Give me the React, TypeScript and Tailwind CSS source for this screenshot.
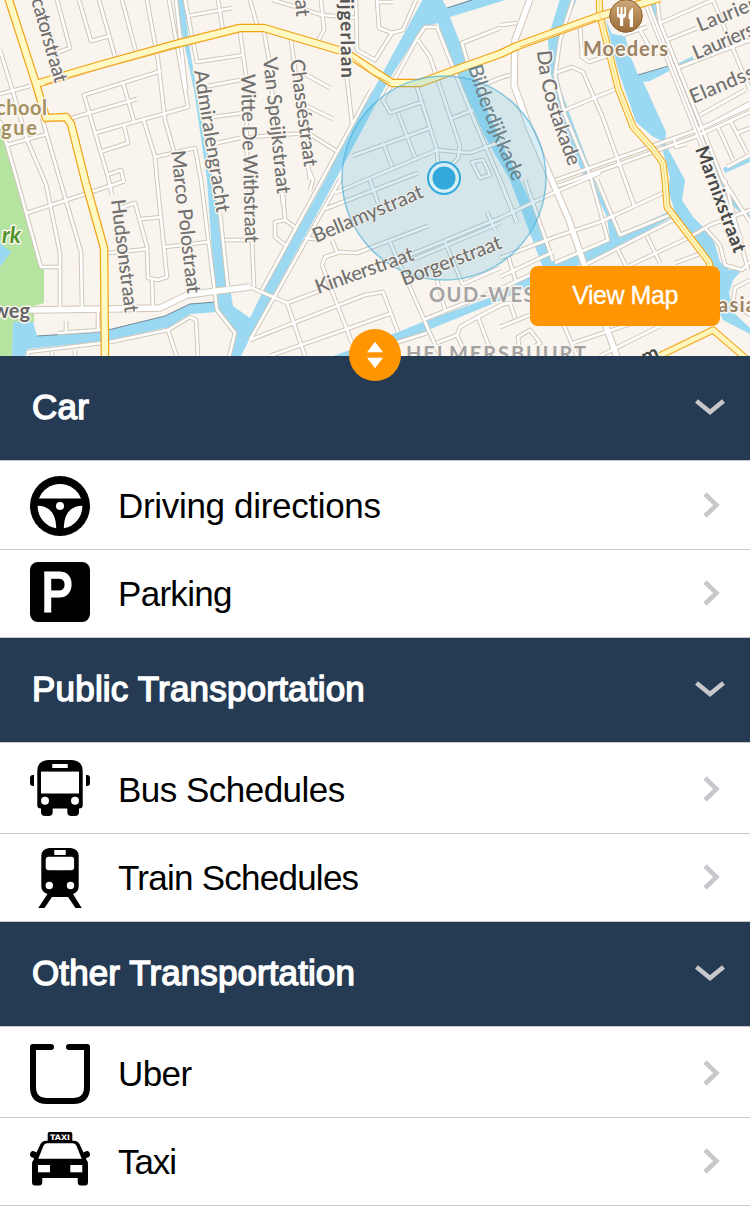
import type { ReactNode } from "react";

const HALO = "#faf5ee";

const water: string[] = [
  "M175 0 H184 L190 50 L200 110 L213 180 L223 240 L230 288 L233 306 L250 318 L262 293 L325 180 L347 133 L375 87 L423 -1 H442 L447 8 L475 -2 H512 L450 17 L468 63 L500 140 L525 190 L555 262 L608 240 L672 210 L675 213 L672 217 L610 252 L548 278 L497 302 L423 332 L355 358 H328 L393 334 L423 322 L497 295 L543 268 L510 180 L485 137 L455 70 L438 23 L422 28 L390 78 L378 100 L337 177 L250 338 L240 358 H227 L236 334 L217 312 L190 314 L170 327 L105 341 L28 349 L24 358 H12 L13 322 H33 L37 336 L100 332 L165 316 L190 304 L215 302 L214 280 L207 180 L194 90 Z",
  "M560 -1 H577 L560 37 L556 67 L561 90 L573 123 L592 173 L598 190 L612 217 L620 237 L610 241 L607 217 L590 182 L582 173 L563 123 L549 67 L548 38 Z",
  "M605 18 L612 34 L625 36 L630 55 L638 75 L675 65 L693 56 V60 L675 68 L650 81 L643 82 L648 92 L650 97 L666 132 L665 143 L673 158 L685 180 L682 200 L693 217 L713 237 L720 262 L730 270 H742 L733 280 L729 293 L734 313 L750 328 V334 L723 320 L713 300 V267 L690 235 L675 212 L668 190 L670 178 L660 140 L652 136 L636 122 L618 70 Z",
  "M647 -1 H655 L657 23 L673 60 L700 122 L723 180 L732 198 L750 215 V222 L729 202 L717 178 L696 124 L671 64 L656 30 Z",
  "M723 168 L750 158 V162 L725 173 Z",
];

const minor: string[] = [
  "M0 50 L13 92 L27 140 L46 184 L60 253 V308", "M0 94 L30 86", "M42 118 L60 180 L81 252 L82 308",
  "M7 145 L47 134", "M0 121 L17 180 L41 267 H60", "M27 213 L125 181", "M57 0 L70 48 L56 53",
  "M79 0 L91 41 L110 36", "M99 0 L116 60", "M122 0 L136 52", "M147 0 L158 60 L165 120 L175 155",
  "M169 0 L188 107 L95 133", "M176 0 L186 90", "M161 71 L84 95 L108 177 L112 195", "M123 83 L134 121", "M72 118 L137 99",
  "M100 152 L128 143 L124 125", "M143 118 L155 157 L157 180 L167 277 L158 280 L148 278 L147 247 L135 203 L120 208",
  "M155 157 L195 148 L201 180 L217 310 L235 333 L229 357", "M107 175 L121 170 L124 182",
  "M185 0 L197 62 L243 55", "M188 16 L232 8", "M218 0 L223 31", "M240 32 L246 75 L247 160 L252 242", "M203 87 L240 80",
  "M213 117 L250 112", "M217 143 L240 138", "M141 219 L162 217", "M165 247 L208 242", "M108 253 L147 249", "M152 280 L153 308",
  "M220 213 L228 288", "M225 240 H250",
  "M58 333 L100 330 M98 311 V330 M66 321 V333",
  "M28 357 V352 L110 342 L168 330 L190 317 L196 320 L198 357", "M168 330 L177 357", "M52 352 V357 M75 350 V357",
  "M250 0 L257 25", "M273 0 L322 15 L357 18", "M321 0 L324 30 L318 41", "M356 0 L357 50 L375 60 L392 33 L403 30 L416 0",
  "M377 0 L379 28 L392 33", "M377 2 H393", "M264 32 L269 60 L283 205", "M291 40 L310 180", "M303 73 L330 88", "M307 106 L333 119",
  "M250 137 L308 133 L338 152", "M347 78 L352 123", "M371 90 L322 180 L262 290", "M437 27 H425 L418 37 L383 100 L390 113 L422 102",
  "M437 27 L470 110 L500 180 L517 223", "M418 40 L430 57 L460 146 L458 158 L450 167", "M417 87 L437 150 L438 164",
  "M398 113 L415 157", "M352 156 L430 128", "M383 143 L392 166", "M450 119 L473 110", "M437 150 L470 153 L500 142",
  "M437 150 L335 193", "M325 209 L418 173", "M370 180 L378 203", "M472 162 L480 178 L490 175 L483 160 Z",
  "M500 28 L462 43 L468 64", "M483 85 L500 78", "M252 242 L254 287", "M283 193 L285 220 L275 222 L275 237 L285 245 M285 220 L295 227",
  "M309 170 L313 180 L310 190", "M250 287 L287 303 L322 290", "M340 180 L250 340", "M305 238 L322 240",
  "M250 340 L365 295 L383 292 L398 332", "M270 356 L392 313", "M287 303 L305 356", "M322 265 L352 343", "M322 265 L325 257 L340 252 L357 253 L428 226",
  "M332 240 L337 252", "M390 242 L440 356", "M445 242 L463 285", "M487 212 L495 230", "M410 255 L500 218 L553 193 L600 173",
  "M412 260 L500 223", "M437 280 L445 310", "M395 343 L427 333", "M423 320 L500 289 L545 268", "M463 284 L500 268",
  "M478 317 L505 303 M478 317 L493 357 M437 343 L457 335 L460 327 L478 317", "M457 335 L466 355", "M500 25 L517 23", "M500 78 L510 75",
  "M573 0 L560 40 L555 75 L565 115 L590 175 L608 240 L555 263", "M555 73 L572 67 L583 72 L603 118 L625 180 L634 205",
  "M580 25 L582 57 L589 62 L607 56", "M558 113 L618 88", "M556 180 L697 130 L750 106", "M558 186 L697 136 L750 112",
  "M623 35 L647 27", "M640 30 L655 57", "M660 23 L713 0", "M667 40 L697 28", "M677 68 L750 40",
  "M713 0 L750 90", "M657 0 L660 23 L723 180 L750 222", "M700 115 L745 90", "M705 127 L750 103", "M718 127 L733 160",
  "M730 120 L747 153", "M737 133 L750 128", "M727 167 L750 155", "M674 138 L676 147 L686 144",
  "M500 258 L555 237 L600 222 L663 193", "M525 180 L553 261", "M597 180 L620 235 L672 214", "M625 180 L634 205",
  "M500 277 L553 252 M508 255 L516 282", "M500 180 L517 222", "M587 264 L677 218", "M617 248 L628 270", "M647 236 L660 263",
  "M620 270 L690 237 L710 225 L750 210", "M675 263 L705 252", "M705 228 L720 245 L725 265 L742 270 L750 262", "M725 180 L736 225 L748 270",
  "M750 280 L735 288 L733 303 L750 315", "M500 305 L510 303 L515 318", "M500 327 L530 315", "M520 356 L518 337 L530 330 L540 343 L535 346",
  "M563 323 L577 356", "M573 343 L633 323", "M600 356 L660 326",
];

const wide: string[] = [
  "M30 310 L108 309 L160 308 L187 295 L217 291 L250 287",
  "M530 -1 L515 40 L514 85 L530 130 L556 190 L569 220 L585 267 L617 357",
  "M645 -1 L698 133 L740 240",
];

const major: string[] = [
  "M8 -3 L36 84 L46 118 L66 117 L71 124 L86 184 L104 248 L105 358",
  "M36 84 L100 65 L180 43 L240 28 L264 28 L345 52 L392 83 L420 83 L455 70 L500 54 L517 46 L600 16 L660 -2",
];
const secondary: string[] = [
  "M599 -2 L600 16 L618 88 L633 127 L652 148 L663 163 L665 180 L667 207 L690 237 L709 262 L715 290",
  "M655 358 L713 330 L750 362",
];

function Road({ d, w, fill, edge }: { d: string; w: number; fill: string; edge: string }) {
  return (
    <>
      <path d={d} stroke={edge} strokeWidth={w + 2} />
      <path d={d} stroke={fill} strokeWidth={w} />
    </>
  );
}

type LabelProps = {
  x: number; y: number; a?: number; len?: number; size?: number;
  color?: string; bold?: boolean; italic?: boolean; halo?: number; children: string;
};
function Label({ x, y, a = 0, len, size = 20, color = "#707070", bold, italic, halo = 3, children }: LabelProps) {
  return (
    <text
      transform={`translate(${x} ${y}) rotate(${a})`}
      fontSize={size} fill={color} textLength={len}
      fontWeight={bold ? 700 : 500} fontStyle={italic ? "italic" : undefined}
      stroke={halo ? HALO : "none"} strokeWidth={halo} strokeLinejoin="round" paintOrder="stroke"
    >
      {children}
    </text>
  );
}

function CityMap() {
  return (
    <svg className="block h-[356px] w-[750px] font-['Lato','Open_Sans',sans-serif]" viewBox="0 0 750 356">
      <defs>
        <linearGradient id="poi" x1="0" y1="0" x2="0" y2="1">
          <stop offset="0" stopColor="#cda877" />
          <stop offset="1" stopColor="#9a6c38" />
        </linearGradient>
        <path id="costa" d="M537 51 C540 85 548 115 571 172" />
        <path id="bilder" d="M468 67 C478 100 490 133 516 188" />
      </defs>
      <rect width="750" height="356" fill="#f9f4ed" />
      <path d="M0 117 L17 180 L40 267 L44 268 V303 L34 306 V322 H13 L12 356 H0 Z" fill="#b5e3a0" />
      <path d="M0 243 L11 252 L0 267 Z" fill="#9bd9f2" />
      {water.map((d) => <path key={d} d={d} fill="#9bd9f2" />)}
      <path d="M37 336 L100 332 L165 316 L190 304 L216 302 M447 8 L472 0 M638 75 L675 64" stroke="#71889a" strokeWidth="1" fill="none" />
      <g fill="none" strokeLinejoin="round">
        {minor.map((d) => <path key={d} d={d} stroke="#d0c7b9" strokeWidth="4.6" />)}
        {wide.map((d) => <path key={d} d={d} stroke="#d0c7b9" strokeWidth="7.4" />)}
        {minor.map((d) => <path key={d} d={d} stroke="#fff" strokeWidth="2.6" />)}
        {wide.map((d) => <path key={d} d={d} stroke="#fff" strokeWidth="5.4" />)}
        <path d={wide[2]} stroke="#d3cbbe" strokeWidth="1" />
        {secondary.map((d) => <Road key={d} d={d} w={5} fill="#fff6bd" edge="#f2a316" />)}
        {major.map((d) => <path key={d} d={d} stroke="#f2a316" strokeWidth="8.6" />)}
        {major.map((d) => <path key={d} d={d} stroke="#fff9c4" strokeWidth="6.2" />)}
        <path d="M45 84 L180 46 M352 58 L372 74 L390 83 M46 121 H64 M520 47 L596 20" stroke="#f3b24a" strokeWidth="1" />
        <path d={secondary[0]} stroke="#f7dc83" strokeWidth="1" />
      </g>
      <circle cx="444" cy="178" r="102" fill="#41b1de" fillOpacity="0.2" stroke="#4bafd9" strokeOpacity="0.65" strokeWidth="1.5" />
      <Label x={31} y={0} a={74} len={87}>catorstraat</Label>
      <Label x={194} y={71} a={81} len={144}>Admiralengracht</Label>
      <Label x={241} y={74} a={88.6} len={169}>Witte De Withstraat</Label>
      <Label x={263} y={58} a={84} len={137}>Van Speijkstraat</Label>
      <Label x={290} y={60} a={82.5} len={108}>Chasséstraat</Label>
      <Label x={171} y={151} a={83.5} len={144}>Marco Polostraat</Label>
      <Label x={111} y={200} a={83} len={114}>Hudsonstraat</Label>
      <Label x={295} y={0} a={85}>at</Label>
      <Label x={340} y={-1} a={89} len={79} color="#555" bold size={19}>ijgerlaan</Label>
      <g fontSize="20" fill="#707070" fontWeight="500" stroke={HALO} strokeWidth="2.5" strokeLinejoin="round">
        <text paintOrder="stroke"><textPath href="#costa" textLength="121">Da Costakade</textPath></text>
        <text paintOrder="stroke" stroke="none" fill="#6c838c"><textPath href="#bilder" textLength="124">Bilderdijkkade</textPath></text>
      </g>
      <Label x={316} y={243} a={-23} len={118} halo={1.5}>Bellamystraat</Label>
      <Label x={318} y={294} a={-19.5} len={103} halo={1.5}>Kinkerstraat</Label>
      <Label x={404} y={286} a={-21} len={106} halo={1.5}>Borgerstraat</Label>
      <Label x={429} y={302} color="#a3a3a3" bold size={20} len={119}>OUD-WEST</Label>
      <Label x={406} y={361} color="#a3a3a3" bold size={20} len={180}>HELMERSBUURT</Label>
      <Label x={583} y={56} color="#9a8264" bold size={20} len={85}>Moeders</Label>
      <Label x={700} y={32} a={-22} len={62}>Laurier</Label>
      <Label x={696} y={60} a={-23} len={72}>Laurierst</Label>
      <Label x={693} y={104} a={-23} len={76}>Elandsst</Label>
      <Label x={695} y={149} a={69.5} len={112} color="#484848" bold size={19}>Marnixstraat</Label>
      <Label x={645} y={364} a={-24} color="#484848" bold size={20}>m</Label>
      <Label x={718} y={312} color="#9a8264" bold size={20} len={38}>asia</Label>
      <Label x={-4} y={115} color="#a2905f" bold size={20} len={51}>chool</Label>
      <Label x={1} y={135} color="#a2905f" bold size={20} len={36}>gue</Label>
      <Label x={2} y={243} color="#4f9227" bold italic size={22}>rk</Label>
      <Label x={-7} y={318} color="#666" bold size={20} len={37}>weg</Label>
      <circle cx="626" cy="16" r="16.3" fill="url(#poi)" stroke="#8b6030" />
      <g fill="#fff">
        <path d="M617 7 h1.7 v7 h1.8 v-7 h2 v7 h1.8 v-7 H626 v8 q0 3 -2.8 3 V26 h-3.2 V18 q-3 0 -3 -3 Z" />
        <path d="M633 8 V27 h-3.2 V19 h-1.2 V15 q1 -6 4.4 -7 Z" />
      </g>
      <circle cx="444" cy="178" r="16" fill="#d8eef6" stroke="#33a8dd" strokeWidth="2" />
      <circle cx="444" cy="178" r="11.5" fill="#33a8dd" />
    </svg>
  );
}

function Icon({ children }: { children: ReactNode }) {
  return <svg className="block size-[60px] shrink-0" viewBox="0 0 60 60" fill="#000">{children}</svg>;
}

const WheelIcon = (
  <Icon>
    <circle cx="30" cy="30" r="30" />
    <g fill="#fff">
      <path d="M9 22.5 A22.5 22.5 0 0 1 51 22.5 Z" />
      <path d="M7.7 29.7 C18 30 26 36 26.2 52.3 A22.5 22.5 0 0 1 7.7 29.7 Z" />
      <path d="M52.3 29.7 C42 30 34 36 33.8 52.3 A22.5 22.5 0 0 0 52.3 29.7 Z" />
      <circle cx="30" cy="30" r="4" />
    </g>
  </Icon>
);
const ParkingIcon = (
  <Icon>
    <rect width="60" height="60" rx="8" />
    <text x="11.8" y="49" fontSize="55" fill="#fff" stroke="#fff" strokeWidth="3" textLength="31" lengthAdjust="spacingAndGlyphs" className="font-['Liberation_Sans',sans-serif]">P</text>
  </Icon>
);
const BusIcon = (
  <Icon>
    <path d="M18 0 H42 Q52.7 1 52.7 11 V45.5 Q52.7 48.5 49 48.5 V52 Q49 56 45 56 H41.5 Q37.3 56 37.3 52 V48.5 H22.7 V52 Q22.7 56 18.5 56 H15 Q11 56 11 52 V48.5 Q7.3 48.5 7.3 45.5 V11 Q7.3 1 18 0 Z" />
    <path d="M4 15 V26 H3 Q0 26 0 23 V18 Q0 15 3 15 Z M56 15 V26 H57 Q60 26 60 23 V18 Q60 15 57 15 Z" />
    <g fill="#fff">
      <rect x="22.3" y="4" width="15.4" height="4" />
      <rect x="11" y="11.6" width="38" height="21.9" />
      <circle cx="15" cy="40.8" r="4" />
      <circle cx="45" cy="40.8" r="4" />
    </g>
  </Icon>
);
const TrainIcon = (
  <Icon>
    <path d="M19 0 H41 Q48.7 1 48.7 8 V38 Q48.7 44 43 46 L51.7 60 H45.5 L38 49 H22 L14.5 60 H8.3 L17.5 46 Q11.3 44 11.3 38 V8 Q11.3 1 19 0 Z" />
    <g fill="#fff">
      <rect x="24.3" y="2" width="11.4" height="5" />
      <rect x="15.7" y="8.7" width="28.4" height="13.6" rx="3" />
      <circle cx="19.3" cy="37.5" r="3.7" />
      <circle cx="40.5" cy="37.5" r="3.7" />
    </g>
  </Icon>
);
const UberIcon = (
  <Icon>
    <path d="M21 3 H3 V43 Q3 57 17 57 H43 Q57 57 57 43 V3 H39" fill="none" stroke="#000" strokeWidth="6" strokeLinecap="round" strokeLinejoin="round" />
  </Icon>
);
const TaxiIcon = (
  <Icon>
    <path d="M19.5 0 H40.5 Q42.3 0 42.3 2 V8.7 H44 Q48 9 49.5 12 L53.5 20.5 Q55.5 18.7 58 19 Q60 20 60 22.5 Q60 25.5 56.5 25.8 L56 27 Q58 29 58 33 V50 Q58 53.5 55 53.5 H51 Q47.7 53.5 47.7 50 V46 H12.3 V50 Q12.3 53.5 9 53.5 H5 Q2 53.5 2 50 V33 Q2 29 4 27 L3.5 25.8 Q0 25.5 0 22.5 Q0 20 2 19 Q4.5 18.7 6.5 20.5 L10.5 12 Q12 9 16 8.7 H17.7 V2 Q17.7 0 19.5 0 Z" />
    <g fill="#fff">
      <path d="M17 11.2 H43 Q45.5 11.2 46.5 13.7 L51.7 26.7 H8.3 L13.5 13.7 Q14.5 11.2 17 11.2 Z" />
      <rect x="8" y="33" width="12" height="7.3" />
      <rect x="40.3" y="33" width="12" height="7.3" />
      <text x="20" y="7.8" fontSize="7.5" fontWeight="700" textLength="20" lengthAdjust="spacingAndGlyphs" className="font-['DejaVu_Sans',sans-serif]">TAXI</text>
    </g>
  </Icon>
);

type RowData = { label: string; icon: ReactNode; tracking: string; iconShift: string; textShift: string };

function Row({ row, first, height }: { row: RowData; first: boolean; height: string }) {
  return (
    <li className={`flex items-start border-b border-[#c8c7cc] bg-white pr-[31px] pl-[30px] ${height} ${first ? "border-t" : ""}`}>
      <div className={row.iconShift}>{row.icon}</div>
      <span className={`ml-7 text-[35px] leading-10 whitespace-nowrap text-black ${row.tracking} ${row.textShift}`}>{row.label}</span>
      <svg className={`ml-auto h-6 w-4 ${row.textShift}`} viewBox="0 -10 16 24" overflow="visible">
        <path d="M2 -2 L13.5 9 L2 20" fill="none" stroke="#c7c7cc" strokeWidth="4.5" />
      </svg>
    </li>
  );
}

function Section({ title, spacing, firstHeight, rows }: { title: string; spacing: string; firstHeight: string; rows: RowData[] }) {
  return (
    <section>
      <h2 className={`flex h-[104px] items-center justify-between bg-[#253a53] pr-[25px] pb-0.5 pl-8 text-[35px] font-normal text-white [-webkit-text-stroke:1.4px_white] ${spacing}`}>
        <span className="whitespace-nowrap">{title}</span>
        <svg className="h-4 w-[30px]" viewBox="0 0 30 16">
          <path d="M1.5 2 L15 13 L28.5 2" fill="none" stroke="#c7c7cc" strokeWidth="4.5" />
        </svg>
      </h2>
      <ul>
        {rows.map((row, i) => <Row key={row.label} row={row} first={i === 0} height={i === 0 ? firstHeight : "h-[88px]"} />)}
      </ul>
    </section>
  );
}

export default function App() {
  return (
    <main className="h-[1206px] w-[750px] overflow-hidden bg-white font-['Liberation_Sans',Arial,sans-serif]">
      <header className="relative h-[356px]">
        <CityMap />
        <button className="absolute top-[266px] left-[530px] h-[60px] w-[190px] rounded-lg bg-[#ff9500] text-[25px] tracking-[-0.45px] text-white [-webkit-text-stroke:0.3px_white]">View Map</button>
        <button aria-label="Resize map" className="absolute top-[329px] left-[349px] size-[52px] rounded-full bg-[#ff9500]">
          <svg viewBox="0 0 52 52" fill="#fff"><path d="M26 12.7 L34 23.3 H18 Z M18 28.7 H34 L26 39.3 Z" /></svg>
        </button>
      </header>
      <Section title="Car" spacing="tracking-[0.2px]" firstHeight="h-[90px]" rows={[
        { label: "Driving directions", icon: WheelIcon, tracking: "tracking-[-0.32px]", iconShift: "pt-[15px]", textShift: "mt-[25px]" },
        { label: "Parking", icon: ParkingIcon, tracking: "tracking-[-0.7px]", iconShift: "pt-3", textShift: "mt-6" },
      ]} />
      <Section title="Public Transportation" spacing="tracking-[0.2px]" firstHeight="h-[92px]" rows={[
        { label: "Bus Schedules", icon: BusIcon, tracking: "tracking-[-0.52px]", iconShift: "pt-[17px]", textShift: "mt-[27px]" },
        { label: "Train Schedules", icon: TrainIcon, tracking: "tracking-[-0.75px]", iconShift: "pt-[14px]", textShift: "mt-6" },
      ]} />
      <Section title="Other Transportation" spacing="tracking-[0.1px]" firstHeight="h-[92px]" rows={[
        { label: "Uber", icon: UberIcon, tracking: "tracking-[-0.6px]", iconShift: "pt-[17px]", textShift: "mt-[27px]" },
        { label: "Taxi", icon: TaxiIcon, tracking: "tracking-[-1.1px]", iconShift: "pt-[14px]", textShift: "mt-6" },
      ]} />
    </main>
  );
}
